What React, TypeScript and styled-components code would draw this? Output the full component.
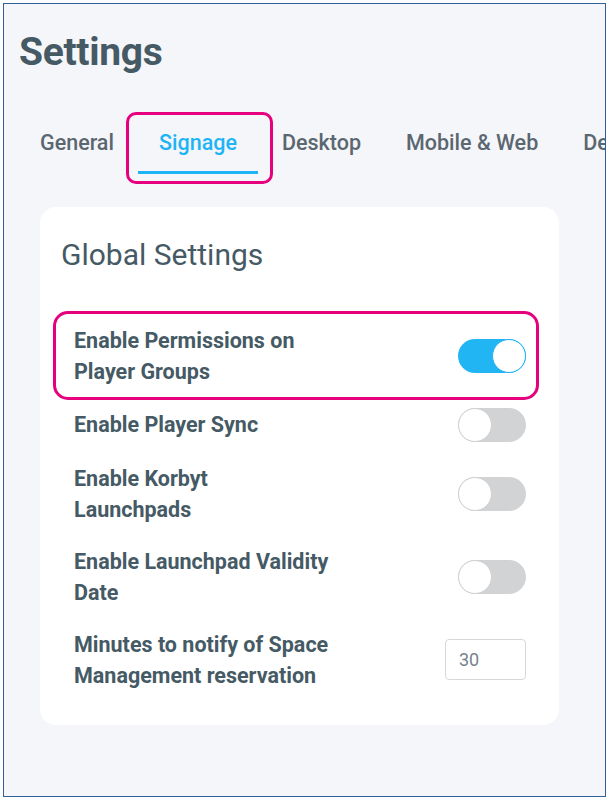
import React from 'react';
import styled, { createGlobalStyle } from 'styled-components';

const GlobalStyle = createGlobalStyle`
  html, body {
    margin: 0;
    padding: 0;
    background: #ffffff;
  }
  body {
    font-family: Roboto, 'Liberation Sans', sans-serif;
  }
`;

const Frame = styled.div`
  box-sizing: border-box;
  margin: 3px;
  width: 603px;
  height: 794px;
  border: 1px solid #2f5f9c;
  background: #f5f6fa;
  overflow: hidden;
  padding: 0 0 0 15px;
`;

const Title = styled.h1`
  margin: 0;
  padding-top: 25px;
  font-size: 39px;
  line-height: 46px;
  font-weight: 700;
  color: #455a64;
  letter-spacing: -0.3px;
`;

const TabBar = styled.div`
  display: flex;
  gap: 3px;
  margin-top: 53px;
  white-space: nowrap;
`;

const Tab = styled.div<{ $active?: boolean; $marked?: boolean }>`
  position: relative;
  flex-shrink: 0;
  min-width: 116px;
  box-sizing: border-box;
  padding: 0 21px 13px;
  font-size: 21.5px;
  font-weight: 500;
  line-height: 30px;
  color: ${p => (p.$active ? '#1fb4f5' : '#5b6770')};
  border-bottom: 3px solid ${p => (p.$active ? '#1fb4f5' : 'transparent')};
  ${p =>
    p.$marked &&
    `
    &::after {
      content: '';
      position: absolute;
      left: -12px;
      right: -15px;
      top: -16px;
      bottom: -13px;
      border: 3px solid #e6007e;
      border-radius: 10px;
    }
  `}
`;

const Card = styled.div`
  box-sizing: border-box;
  width: 519px;
  margin: 33px 0 0 21px;
  background: #ffffff;
  border-radius: 16px;
  padding: 30px 23px 24px 16px;
`;

const CardTitle = styled.h2`
  margin: 0 0 41px 5px;
  font-size: 30px;
  font-weight: 400;
  line-height: 36px;
  color: #455a64;
`;

const Rows = styled.div`
  display: flex;
  flex-direction: column;
`;

const Row = styled.div<{ $marked?: boolean }>`
  display: flex;
  align-items: center;
  justify-content: space-between;
  padding: 10.5px 10px 10.5px 18px;
  border-radius: 12px;
  outline: ${p => (p.$marked ? '3px solid #e6007e' : 'none')};
`;

const Label = styled.div`
  font-size: 21.5px;
  font-weight: 700;
  line-height: 31px;
  color: #455a64;
  white-space: nowrap;
`;

const Track = styled.div<{ $on: boolean }>`
  box-sizing: border-box;
  display: flex;
  justify-content: ${p => (p.$on ? 'flex-end' : 'flex-start')};
  width: 68px;
  height: 34px;
  border-radius: 17px;
  background: ${p => (p.$on ? '#22b5f4' : '#d2d3d5')};
`;

const Knob = styled.div<{ $on: boolean }>`
  box-sizing: border-box;
  width: 34px;
  height: 34px;
  border-radius: 50%;
  background: #ffffff;
  border: 1px solid ${p => (p.$on ? '#22b5f4' : '#cfd0d2')};
`;

const NumberInput = styled.input`
  box-sizing: border-box;
  width: 81px;
  height: 41px;
  border: 1px solid #d6d9dc;
  border-radius: 4px;
  padding: 0 13px;
  font-family: Roboto, 'Liberation Sans', sans-serif;
  font-size: 18px;
  color: #75838d;
  background: #ffffff;
  outline: none;
`;

function Toggle({ on }: { on: boolean }) {
  return (
    <Track $on={on}>
      <Knob $on={on} />
    </Track>
  );
}

function Lines({ lines }: { lines: string[] }) {
  return (
    <Label>
      {lines.map((l, i) => (
        <div key={i}>{l}</div>
      ))}
    </Label>
  );
}

const tabs = ['General', 'Signage', 'Desktop', 'Mobile & Web', 'Devices'];

const toggles = [
  { lines: ['Enable Permissions on', 'Player Groups'], on: true, marked: true },
  { lines: ['Enable Player Sync'], on: false },
  { lines: ['Enable Korbyt', 'Launchpads'], on: false },
  { lines: ['Enable Launchpad Validity', 'Date'], on: false },
];

export default function App() {
  return (
    <>
      <GlobalStyle />
      <Frame>
        <Title>Settings</Title>
        <TabBar>
          {tabs.map(t => (
            <Tab key={t} $active={t === 'Signage'} $marked={t === 'Signage'}>
              {t}
            </Tab>
          ))}
        </TabBar>
        <Card>
          <CardTitle>Global Settings</CardTitle>
          <Rows>
            {toggles.map(t => (
              <Row key={t.lines[0]} $marked={t.marked}>
                <Lines lines={t.lines} />
                <Toggle on={t.on} />
              </Row>
            ))}
            <Row>
              <Lines lines={['Minutes to notify of Space', 'Management reservation']} />
              <NumberInput defaultValue="30" />
            </Row>
          </Rows>
        </Card>
      </Frame>
    </>
  );
}
